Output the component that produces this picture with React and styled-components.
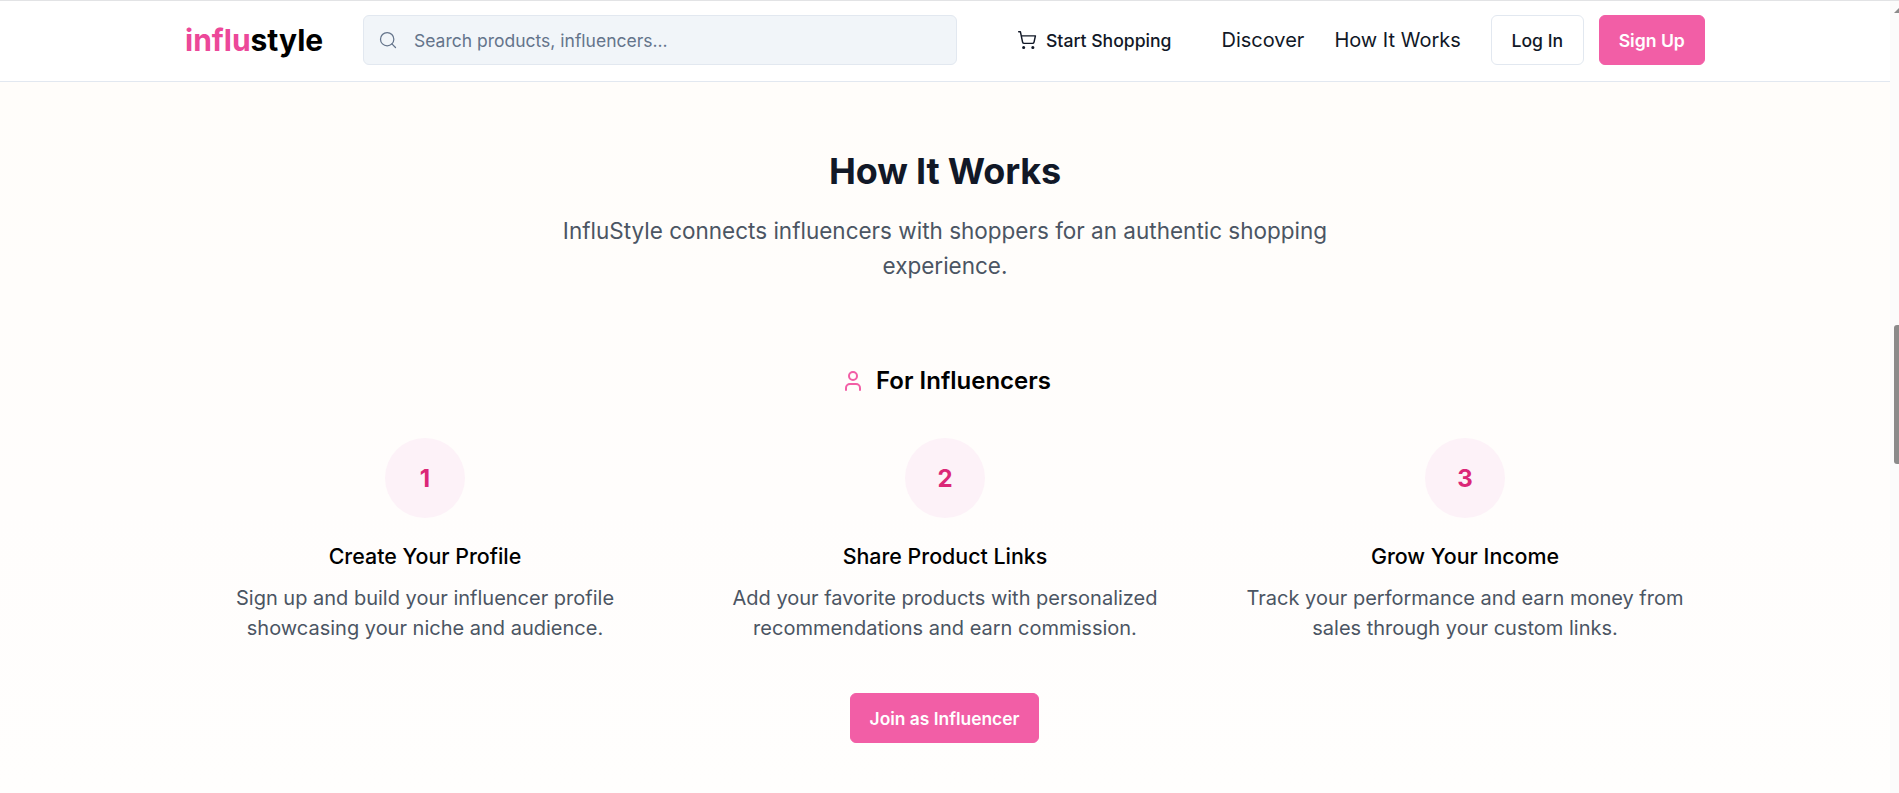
import React from "react";
import styled, { createGlobalStyle } from "styled-components";
import { Search, ShoppingCart, User } from "lucide-react";

const Global = createGlobalStyle`
  html, body { margin: 0; padding: 0; height: 100%; overflow: hidden; background: #fffefc; }
  * { box-sizing: border-box; }
  body { font-family: Inter, "Noto Sans", sans-serif; color: #111827; }
`;
const Shell = styled.div`
  display: flex; width: 1899px; height: 793px; overflow: hidden; border-top: 1px solid #e2e3e5;
`;
const Page = styled.div`flex: 1; min-width: 0; display: flex; flex-direction: column;`;
const Header = styled.header`
  height: 81px; flex: none; background: #fff; border-bottom: 1px solid #e2e8f0; padding-bottom: 2px;
  display: flex; justify-content: center;
`;
const HeaderInner = styled.div`
  width: 1536px; padding: 0 8px; display: flex; align-items: center;
`;
const Logo = styled.div`
  font-size: 30px; font-weight: 700; color: #000; width: 178px; flex: none; line-height: 36px;
  span { color: #ec4899; }
`;
const SearchBox = styled.div`
  width: 594px; height: 50px; flex: none; background: #f1f5f9; border: 1px solid #e2e8f0;
  border-radius: 6px; display: flex; align-items: center; padding-left: 14px; gap: 16px;
  color: #64748b; font-size: 17.5px;
`;
const ShopLink = styled.a`
  display: flex; align-items: center; gap: 9px; margin-left: 60px; font-size: 17.6px; font-weight: 500; color: #111827;
`;
const NavLink = styled.a`font-size: 20px; color: #111827; margin-left: ${p => p.$gap}px;`;
const Button = styled.button`
  height: 50px; border-radius: 6px; font-family: inherit; font-size: 17.6px; font-weight: ${p => p.$primary ? 600 : 500};
  border: 1px solid ${p => p.$primary ? "#f25ea6" : "#e2e8f0"};
  background: ${p => p.$primary ? "#f25ea6" : "#fff"};
  color: ${p => p.$primary ? "#fff" : "#111827"};
  width: ${p => p.$w}px; margin-left: ${p => p.$gap || 0}px; padding: 0;
`;
const Main = styled.main`
  flex: 1; display: flex; flex-direction: column; align-items: center; padding-top: 67px;
  background: linear-gradient(#fffdfa, #fffdfc 60%, #fffefd);
`;
const Title = styled.h1`font-size: 36px; line-height: 45px; font-weight: 700; color: #111827; margin: 0; letter-spacing: -0.15px;`;
const Sub = styled.p`
  margin: 19px 0 0; width: 800px; text-align: center; font-size: 22.5px; line-height: 35px; color: #4b5563;
`;
const ForHead = styled.div`
  margin: 82px 0 0 2px; display: flex; align-items: center; gap: 11px; font-size: 24px; font-weight: 600; color: #000; line-height: 32px;
  svg { color: #f25ea6; }
`;
const Steps = styled.div`
  margin-top: 41px; width: 1520px; display: grid; grid-template-columns: repeat(3, 1fr); gap: 40px;
`;
const Step = styled.div`display: flex; flex-direction: column; align-items: center; text-align: center;`;
const Circle = styled.div`
  width: 80px; height: 80px; border-radius: 50%; background: #fdf2f8; color: #db2777;
  display: flex; align-items: center; justify-content: center; font-size: 24px; font-weight: 700;
`;
const StepTitle = styled.h3`margin: 24px 0 0; font-size: 21.4px; line-height: 28px; font-weight: 500; color: #000;`;
const StepText = styled.p`margin: 13px 0 0; width: 480px; font-size: 20px; line-height: 30px; color: #4b5563;`;
const Cta = styled(Button)`margin-top: 50px; margin-right: 1px; flex: none; font-size: 17.4px;`;
const Scroll = styled.aside`
  position: relative; width: 9px; flex: none; background: #fbfbfb;
`;
const Thumb = styled.div`
  position: absolute; right: 0; top: 324px; width: 5px; height: 139px; background: #8b8b8b; border-radius: 3px 0 0 3px;
`;
const Arrow = styled.div`
  position: absolute; right: 0; top: 7px; width: 0; height: 0;
  border-left: 5px solid transparent; border-bottom: 5px solid #8b8b8b;
`;

const steps = [
  ["1", "Create Your Profile", <>Sign up and build your influencer profile<br />showcasing your niche and audience.</>],
  ["2", "Share Product Links", <>Add your favorite products with personalized<br />recommendations and earn commission.</>],
  ["3", "Grow Your Income", <>Track your performance and earn money from<br />sales through your custom links.</>],
];

export default function App() {
  return (
    <Shell>
      <Global />
      <Page>
        <Header>
          <HeaderInner>
            <Logo><span>influ</span>style</Logo>
            <SearchBox><Search size={20} strokeWidth={1.5} />Search products, influencers...</SearchBox>
            <ShopLink><ShoppingCart size={20} strokeWidth={1.75} />Start Shopping</ShopLink>
            <NavLink $gap={50}>Discover</NavLink>
            <NavLink $gap={30}>How It Works</NavLink>
            <Button $w={93} $gap={30}>Log In</Button>
            <Button $primary $w={106} $gap={15}>Sign Up</Button>
          </HeaderInner>
        </Header>
        <Main>
          <Title>How It Works</Title>
          <Sub>InfluStyle connects influencers with shoppers for an authentic shopping experience.</Sub>
          <ForHead><User size={24} strokeWidth={2} />For Influencers</ForHead>
          <Steps>
            {steps.map(([n, t, d]) => (
              <Step key={n}>
                <Circle>{n}</Circle>
                <StepTitle>{t}</StepTitle>
                <StepText>{d}</StepText>
              </Step>
            ))}
          </Steps>
          <Cta $primary $w={189}>Join as Influencer</Cta>
        </Main>
      </Page>
      <Scroll><Arrow /><Thumb /></Scroll>
    </Shell>
  );
}
